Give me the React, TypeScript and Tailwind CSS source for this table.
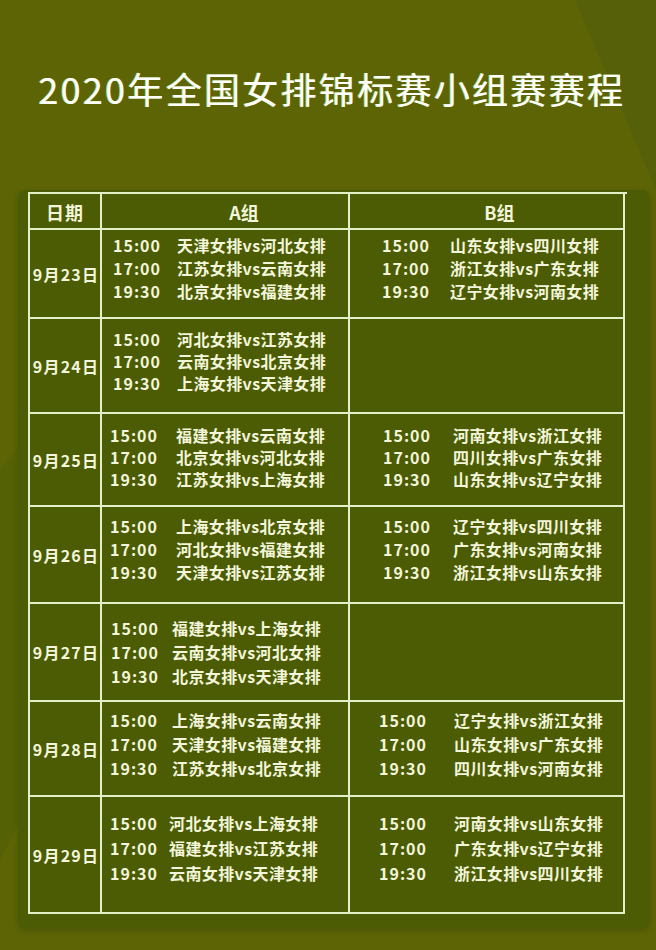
import React from "react";

type Match = { t: string; m: string };
type Row = {
  date: string;
  h: string;
  a: Match[];
  b: Match[];
  aCls: string;
  bCls: string;
  aTime: string;
  bTime: string;
  lead: string;
};

const rows: Row[] = [
  {
    date: "9月23日",
    h: "h-[89px]",
    aCls: "pl-[11px] pt-[4px]",
    bCls: "pl-[32px] pt-[4px]",
    aTime: "w-[64px]",
    bTime: "w-[68px]",
    lead: "leading-[23px]",
    a: [
      { t: "15:00", m: "天津女排vs河北女排" },
      { t: "17:00", m: "江苏女排vs云南女排" },
      { t: "19:30", m: "北京女排vs福建女排" },
    ],
    b: [
      { t: "15:00", m: "山东女排vs四川女排" },
      { t: "17:00", m: "浙江女排vs广东女排" },
      { t: "19:30", m: "辽宁女排vs河南女排" },
    ],
  },
  {
    date: "9月24日",
    h: "h-[95px]",
    aCls: "pl-[11px] pt-[9px]",
    bCls: "pl-[32px] pt-[9px]",
    aTime: "w-[64px]",
    bTime: "w-[71px]",
    lead: "leading-[22px]",
    a: [
      { t: "15:00", m: "河北女排vs江苏女排" },
      { t: "17:00", m: "云南女排vs北京女排" },
      { t: "19:30", m: "上海女排vs天津女排" },
    ],
    b: [],
  },
  {
    date: "9月25日",
    h: "h-[93px]",
    aCls: "pl-[8px] pt-[10px]",
    bCls: "pl-[33px] pt-[10px]",
    aTime: "w-[66px]",
    bTime: "w-[70px]",
    lead: "leading-[22px]",
    a: [
      { t: "15:00", m: "福建女排vs云南女排" },
      { t: "17:00", m: "北京女排vs河北女排" },
      { t: "19:30", m: "江苏女排vs上海女排" },
    ],
    b: [
      { t: "15:00", m: "河南女排vs浙江女排" },
      { t: "17:00", m: "四川女排vs广东女排" },
      { t: "19:30", m: "山东女排vs辽宁女排" },
    ],
  },
  {
    date: "9月26日",
    h: "h-[97px]",
    aCls: "pl-[8px] pt-[8px]",
    bCls: "pl-[33px] pt-[8px]",
    aTime: "w-[66px]",
    bTime: "w-[70px]",
    lead: "leading-[23px]",
    a: [
      { t: "15:00", m: "上海女排vs北京女排" },
      { t: "17:00", m: "河北女排vs福建女排" },
      { t: "19:30", m: "天津女排vs江苏女排" },
    ],
    b: [
      { t: "15:00", m: "辽宁女排vs四川女排" },
      { t: "17:00", m: "广东女排vs河南女排" },
      { t: "19:30", m: "浙江女排vs山东女排" },
    ],
  },
  {
    date: "9月27日",
    h: "h-[98px]",
    aCls: "pl-[9px] pt-[12px]",
    bCls: "pl-[32px] pt-[12px]",
    aTime: "w-[61px]",
    bTime: "w-[71px]",
    lead: "leading-[24px]",
    a: [
      { t: "15:00", m: "福建女排vs上海女排" },
      { t: "17:00", m: "云南女排vs河北女排" },
      { t: "19:30", m: "北京女排vs天津女排" },
    ],
    b: [],
  },
  {
    date: "9月28日",
    h: "h-[95px]",
    aCls: "pl-[8px] pt-[6px]",
    bCls: "pl-[29px] pt-[6px]",
    aTime: "w-[62px]",
    bTime: "w-[75px]",
    lead: "leading-[24px]",
    a: [
      { t: "15:00", m: "上海女排vs云南女排" },
      { t: "17:00", m: "天津女排vs福建女排" },
      { t: "19:30", m: "江苏女排vs北京女排" },
    ],
    b: [
      { t: "15:00", m: "辽宁女排vs浙江女排" },
      { t: "17:00", m: "山东女排vs广东女排" },
      { t: "19:30", m: "四川女排vs河南女排" },
    ],
  },
  {
    date: "9月29日",
    h: "h-[117px]",
    aCls: "pl-[8px] pt-[14px]",
    bCls: "pl-[29px] pt-[14px]",
    aTime: "w-[59px]",
    bTime: "w-[75px]",
    lead: "leading-[25px]",
    a: [
      { t: "15:00", m: "河北女排vs上海女排" },
      { t: "17:00", m: "福建女排vs江苏女排" },
      { t: "19:30", m: "云南女排vs天津女排" },
    ],
    b: [
      { t: "15:00", m: "河南女排vs山东女排" },
      { t: "17:00", m: "广东女排vs辽宁女排" },
      { t: "19:30", m: "浙江女排vs四川女排" },
    ],
  },
];

const line = "border-[#e3efc6]";

function MatchList({ list, cls, timeW, lead }: { list: Match[]; cls: string; timeW: string; lead: string }) {
  return (
    <div className={`flex flex-col ${cls} ${lead}`}>
      {list.map((x, i) => (
        <div key={i} className="flex items-center">
          <span className={`${timeW} shrink-0 tracking-[1px]`}>{x.t}</span>
          <span className="tracking-[0.4px]">{x.m}</span>
        </div>
      ))}
    </div>
  );
}

export default function App() {
  return (
    <div
      className="relative w-[656px] h-[950px] overflow-hidden bg-[#5c6406] text-[#f3f6da]"
      style={{ fontFamily: '"Noto Sans CJK SC", "Noto Sans", sans-serif' }}
    >
      <svg className="absolute inset-0" width="656" height="950" viewBox="0 0 656 950">
        <polygon points="575,0 656,0 656,190" fill="#556008" />
        <polygon points="0,470 40,420 40,780 0,860" fill="#526006" opacity="0.7" />
      </svg>

      <div className="relative flex flex-col">
        <h1 className="pt-[67px] pl-[8px] text-center text-[36px] leading-[42px] font-normal tracking-[2.3px] text-white [text-shadow:-1px_0_0_#a8d060]">
          2020年全国女排锦标赛小组赛赛程
        </h1>

        <div className="ml-[18px] mt-[81px] w-[632px] rounded-lg bg-[#4c5c05] pl-[10px] pt-[2px] pb-[15px] shadow-[0_2px_6px_rgba(0,0,0,0.15)]">
          <div className={`w-[599px] border-t-2 border-l-2 ${line} text-[16px] font-semibold`}>
            <div className="grid grid-cols-[72px_248px_275px]">
              <div className={`h-[36px] border-r-2 border-b-2 ${line} flex items-center justify-center pt-[3px] text-[18px] tracking-[1px]`}>
                日期
              </div>
              <div className={`h-[36px] border-r-2 border-b-2 ${line} flex items-center justify-center pl-[38px] pt-[3px] text-[18px]`}>
                A组
              </div>
              <div className={`h-[36px] border-r-2 border-b-2 ${line} flex items-center justify-center pl-[26px] pt-[3px] text-[18px]`}>
                B组
              </div>
              {rows.map((r) => (
                <React.Fragment key={r.date}>
                  <div className={`${r.h} border-r-2 border-b-2 ${line} flex items-center justify-center pl-[2px] tracking-[1.2px]`}>
                    {r.date}
                  </div>
                  <div className={`${r.h} border-r-2 border-b-2 ${line}`}>
                    <MatchList list={r.a} cls={r.aCls} timeW={r.aTime} lead={r.lead} />
                  </div>
                  <div className={`${r.h} border-r-2 border-b-2 ${line}`}>
                    <MatchList list={r.b} cls={r.bCls} timeW={r.bTime} lead={r.lead} />
                  </div>
                </React.Fragment>
              ))}
            </div>
          </div>
        </div>
      </div>
    </div>
  );
}
